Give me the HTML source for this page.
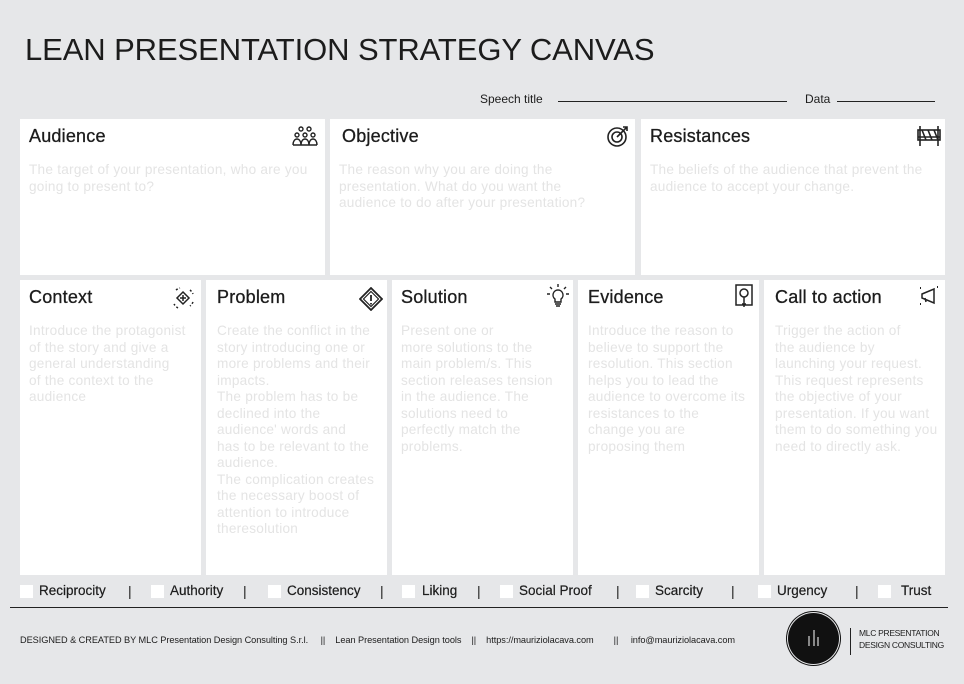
<!DOCTYPE html>
<html><head><meta charset="utf-8"><style>
*{margin:0;padding:0;box-sizing:border-box}
body{width:964px;height:684px;background:#e6e7e9;font-family:"Liberation Sans",sans-serif;position:relative;overflow:hidden;color:#1c1c1c}
.a{position:absolute}
.box{position:absolute;background:#fff}
.box h2{position:absolute;left:9px;top:7px;font-size:18px;font-weight:normal;color:#1c1c1c;letter-spacing:0.2px;-webkit-text-stroke:0.3px #1c1c1c}
.box p{position:absolute;left:9px;top:43px;font-size:13.6px;letter-spacing:0.25px;line-height:16.5px;color:#e4e4e4;white-space:nowrap}
.box svg{position:absolute;top:6px}
.cb{position:absolute;top:585px;width:13px;height:13px;background:#fff}
.lb{position:absolute;top:583px;font-size:13.5px;color:#1c1c1c;-webkit-text-stroke:0.2px #1c1c1c}
.sep{position:absolute;top:583px;font-size:14px}
</style></head><body>
<div class="a" style="left:25px;top:32px;font-size:31px;letter-spacing:-0.1px;color:#1c1c1c">LEAN PRESENTATION STRATEGY CANVAS</div>
<div class="a" style="left:480px;top:92px;font-size:12px">Speech title</div>
<div class="a" style="left:558px;top:101px;width:229px;height:1px;background:#222"></div>
<div class="a" style="left:805px;top:92px;font-size:12px">Data</div>
<div class="a" style="left:837px;top:101px;width:98px;height:1px;background:#222"></div>

<div class="box" style="left:20px;top:119px;width:305px;height:156px"><h2>Audience</h2>
<svg style="left:272px" width="26" height="22" viewBox="0 0 26 22" fill="none" stroke="#222" stroke-width="1.4"><circle cx="9" cy="4" r="2"/><circle cx="17" cy="4" r="2"/><circle cx="5" cy="10" r="2"/><circle cx="13" cy="10" r="2"/><circle cx="21" cy="10" r="2"/><path d="M1 20c0-4 2-6 4-6s4 2 4 6M9 20c0-4 2-6 4-6s4 2 4 6M17 20c0-4 2-6 4-6s4 2 4 6M1 20h24"/></svg>
<p>The target of your presentation, who are you<br>going to present to?</p></div>
<div class="box" style="left:330px;top:119px;width:305px;height:156px"><h2 style="left:12px">Objective</h2>
<svg style="left:276px;top:5px" width="24" height="24" viewBox="0 0 24 24" fill="none" stroke="#222" stroke-width="1.6"><circle cx="11" cy="13" r="9"/><circle cx="11" cy="13" r="5"/><path d="M11 13L21 3M17 3h4v4"/></svg>
<p>The reason why you are doing the<br>presentation. What do you want the<br>audience to do after your presentation?</p></div>
<div class="box" style="left:641px;top:119px;width:304px;height:156px"><h2>Resistances</h2>
<svg style="left:276px" width="24" height="22" viewBox="0 0 24 22" fill="none" stroke="#222" stroke-width="1.6"><rect x="1" y="5" width="22" height="10"/><path d="M3 1v20M21 1v20M5 5l4 10M11 5l4 10M17 5l4 10M1 12h22" /></svg>
<p>The beliefs of the audience that prevent the<br>audience to accept your change.</p></div>

<div class="box" style="left:20px;top:280px;width:181px;height:295px"><h2>Context</h2>
<svg style="left:150px;top:5px" width="26" height="26" viewBox="0 0 26 26" fill="none" stroke="#222" stroke-width="1.5"><path d="M13 7l6 6-6 6-6-6z"/><path d="M10 13h6M13 10v6" /><path d="M6 5a11 11 0 0 1 4-2M20 5a11 11 0 0 1 3 4M23 17a11 11 0 0 1-3 4M8 23a11 11 0 0 1-4-4" stroke-dasharray="2 2"/></svg>
<p>Introduce the protagonist<br>of the story and give a<br>general understanding<br>of the context to the<br>audience</p></div>
<div class="box" style="left:206px;top:280px;width:181px;height:295px"><h2 style="left:11px">Problem</h2>
<svg style="left:153px;top:7px" width="24" height="24" viewBox="0 0 24 24" fill="none" stroke="#222" stroke-width="1.8"><path d="M12 1l11 11-11 11L1 12z"/><path d="M12 4.5l7.5 7.5-7.5 7.5-7.5-7.5z" stroke-width="1.2"/><path d="M12 8v6M12 16v1.5"/></svg>
<p style="left:11px">Create the conflict in the<br>story introducing one or<br>more problems and their<br>impacts.<br>The problem has to be<br>declined into the<br>audience' words and<br>has to be relevant to the<br>audience.<br>The complication creates<br>the necessary boost of<br>attention to introduce<br>theresolution</p></div>
<div class="box" style="left:392px;top:280px;width:181px;height:295px"><h2>Solution</h2>
<svg style="left:155px;top:4px" width="22" height="24" viewBox="0 0 22 24" fill="none" stroke="#222" stroke-width="1.4"><path d="M11 6a5 5 0 0 0-3 9v3h6v-3a5 5 0 0 0-3-9zM8 20h6M9 22h4M11 0v3M3 3l2 2M19 3l-2 2M0 10h3M19 10h3"/></svg>
<p>Present one or<br>more solutions to the<br>main problem/s. This<br>section releases tension<br>in the audience. The<br>solutions need to<br>perfectly match the<br>problems.</p></div>
<div class="box" style="left:578px;top:280px;width:181px;height:295px"><h2 style="left:10px">Evidence</h2>
<svg style="left:157px;top:4px" width="18" height="24" viewBox="0 0 18 24" fill="none" stroke="#222" stroke-width="1.5"><rect x="1" y="1" width="16" height="20"/><circle cx="9" cy="9" r="4"/><path d="M9 13v10M7 20h4"/></svg>
<p style="left:10px">Introduce the reason to<br>believe to support the<br>resolution. This section<br>helps you to lead the<br>audience to overcome its<br>resistances to the<br>change you are<br>proposing them</p></div>
<div class="box" style="left:764px;top:280px;width:181px;height:295px"><h2 style="left:11px">Call to action</h2>
<svg style="left:155px;top:6px" width="20" height="20" viewBox="0 0 20 20" fill="none" stroke="#222" stroke-width="1.5"><path d="M3 8l12-5v14L3 12zM3 8v4M6 12l1 4"/><path d="M1 2h1M18 1h1M1 18h1" stroke-width="2"/></svg>
<p style="left:11px">Trigger the action of<br>the audience by<br>launching your request.<br>This request represents<br>the objective of your<br>presentation. If you want<br>them to do something you<br>need to directly ask.</p></div>

<div class="cb" style="left:20px"></div><div class="lb" style="left:39px">Reciprocity</div><div class="sep" style="left:128px">|</div>
<div class="cb" style="left:151px"></div><div class="lb" style="left:170px">Authority</div><div class="sep" style="left:243px">|</div>
<div class="cb" style="left:268px"></div><div class="lb" style="left:287px">Consistency</div><div class="sep" style="left:380px">|</div>
<div class="cb" style="left:402px"></div><div class="lb" style="left:422px">Liking</div><div class="sep" style="left:477px">|</div>
<div class="cb" style="left:500px"></div><div class="lb" style="left:519px">Social Proof</div><div class="sep" style="left:616px">|</div>
<div class="cb" style="left:636px"></div><div class="lb" style="left:655px">Scarcity</div><div class="sep" style="left:731px">|</div>
<div class="cb" style="left:758px"></div><div class="lb" style="left:777px">Urgency</div><div class="sep" style="left:855px">|</div>
<div class="cb" style="left:878px"></div><div class="lb" style="left:901px">Trust</div>
<div class="a" style="left:10px;top:607px;width:938px;height:1px;background:#222"></div>

<div class="a" style="left:20px;top:635px;font-size:9.2px;white-space:nowrap;letter-spacing:-0.05px">DESIGNED &amp; CREATED BY MLC Presentation Design Consulting S.r.l. &nbsp;&nbsp;&nbsp;&nbsp;|| &nbsp;&nbsp;&nbsp;Lean Presentation Design tools &nbsp;&nbsp;&nbsp;|| &nbsp;&nbsp;&nbsp;https://mauriziolacava.com &nbsp;&nbsp;&nbsp;&nbsp;&nbsp;&nbsp;&nbsp;|| &nbsp;&nbsp;&nbsp;&nbsp;info@mauriziolacava.com</div>
<div class="a" style="left:788px;top:613px;width:51px;height:51px;border-radius:50%;background:#111;box-shadow:0 0 0 1px #e6e7e9,0 0 0 2px #111"></div>
<svg class="a" style="left:804px;top:628px" width="20" height="22" viewBox="0 0 20 22" stroke="#fff" stroke-width="1"><path d="M5 8v10M10 2v16M14 9v9"/></svg>
<div class="a" style="left:850px;top:628px;width:1px;height:27px;background:#222"></div>
<div class="a" style="left:859px;top:627px;font-size:8.5px;line-height:12px;letter-spacing:-0.3px">MLC PRESENTATION<br>DESIGN CONSULTING</div>
</body></html>
